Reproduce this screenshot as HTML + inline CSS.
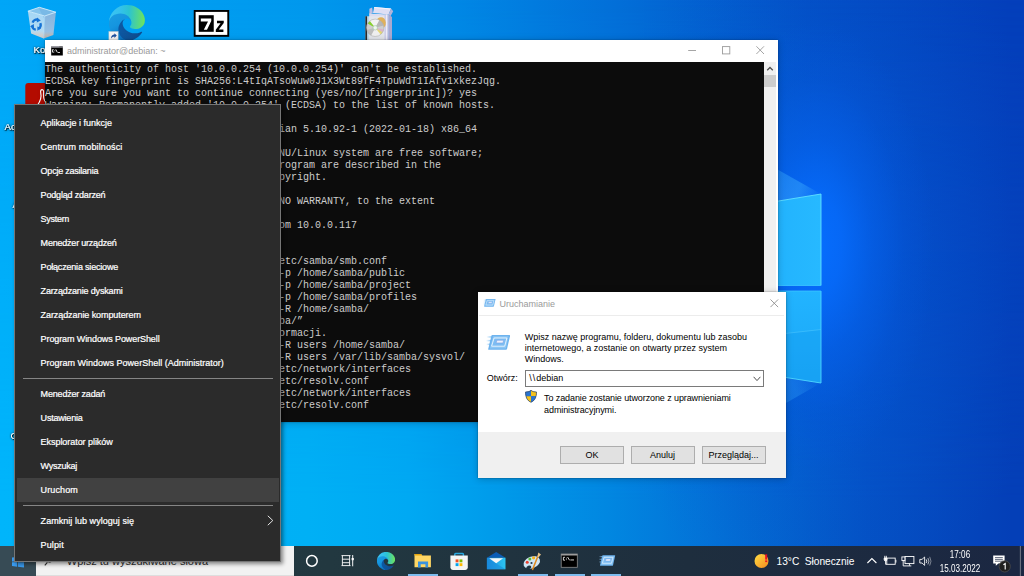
<!DOCTYPE html>
<html lang="pl">
<head>
<meta charset="utf-8">
<title>Pulpit</title>
<style>
*{box-sizing:border-box;margin:0;padding:0}
html,body{width:1024px;height:576px;overflow:hidden;background:#0370d9}
body{position:relative;font-family:"Liberation Sans",sans-serif;font-size:9px;color:#000}
.abs{position:absolute}
/* wallpaper */
#wp1{left:0;top:0;width:1024px;height:576px;background:linear-gradient(90deg,#00a6f7 0px,#0098ed 308px,#0187e5 458px,#0370d9 608px,#0450c6 808px,#043fbb 1008px,#043fbb 1024px)}
#wp2{left:0;top:0;width:1024px;height:576px;background:linear-gradient(90deg,#00b5fb 0px,#00b0f5 308px,#00a9f3 408px,#0099e9 508px,#0187e1 608px,#0372d7 708px,#0451c4 868px,#043fb7 1012px,#043fb7 1024px);-webkit-mask-image:linear-gradient(180deg,rgba(0,0,0,0) 0px,rgba(0,0,0,1) 500px);mask-image:linear-gradient(180deg,rgba(0,0,0,0) 0px,rgba(0,0,0,1) 500px)}
#glow{left:560px;top:-120px;width:520px;height:760px;background:radial-gradient(ellipse 118px 225px at 256px 366px,rgba(6,110,255,.96) 0%,rgba(6,106,250,.9) 22%,rgba(5,98,238,.6) 48%,rgba(5,90,225,.26) 75%,rgba(5,85,215,0) 100%),radial-gradient(ellipse 250px 340px at 262px 380px,rgba(5,92,225,.42) 0%,rgba(5,88,220,.3) 40%,rgba(5,84,212,.1) 78%,rgba(5,80,210,0) 100%)}
#deskicons{left:0;top:0}
/* terminal */
#term{left:45px;top:40px;width:732.5px;height:382px;background:#fff;box-shadow:0 1px 7px rgba(0,0,0,.22),0 0 1.5px rgba(0,0,0,.35)}
#term .tb{left:0;top:0;width:100%;height:22px;background:#fff}
#term .title{left:22px;top:0;line-height:22px;color:#9a9a9a;font-size:9px;white-space:pre}
#term .con{left:0;top:22px;width:719.4px;height:360px;background:#0c0c0c;overflow:hidden}
#term pre{position:absolute;left:0;top:2px;font-family:"Liberation Mono",monospace;font-size:10px;line-height:12px;color:#cccccc;white-space:pre}
#term .sb{left:719.4px;top:22px;width:12.1px;height:360px;background:#f0f0f0}
#term .thumb{left:0;top:13px;width:12.1px;height:12.2px;background:#cdcdcd}
/* run dialog */
#run{left:477.5px;top:292px;width:308px;height:186px;background:#fff;box-shadow:0 1px 7px rgba(0,0,0,.22),0 0 1.5px rgba(0,0,0,.4)}
#run .title{left:22px;top:.7px;line-height:23px;color:#9a9a9a;font-size:9px}
#run .sep{left:1.5px;top:23.2px;width:305px;height:1px;background:#ececec}
#run .foot{left:0;top:140px;width:308px;height:46px;background:#f0f0f0}
#run .txt{white-space:pre;font-size:9px;line-height:10.9px;color:#000}
#run .inp{left:47.3px;top:77.8px;width:239.4px;height:17.4px;border:1px solid #7a7a7a;background:#fff}
#run .btn{top:154.4px;width:64px;height:17.5px;border:1px solid #adadad;background:#e1e1e1;text-align:center;line-height:17px;font-size:9px}
/* taskbar */
#task{left:0;top:546px;width:1024px;height:30px;background:linear-gradient(90deg,#243a42 0px,#223840 330px,#1e2e3e 688px,#1b2742 1010px,#1b2742 1024px)}
#task .start{left:0;top:0;width:36px;height:30px;background:#374b55}
#task .search{left:36px;top:0;width:258px;height:30px;background:#f2f2f2;box-shadow:inset 0 -1px 0 #dedede}
#task .ul{top:28px;height:2px;width:30px;background:#7dbcee}
#task .tt{color:#fff;white-space:pre}
/* menu */
#menu{left:14px;top:104px;width:267px;height:458px;background:#2b2b2b;border:1px solid #767676;box-shadow:2px 2px 4px rgba(0,0,0,.45)}
#menu .it{-webkit-text-stroke:.22px #fff;position:absolute;left:2px;width:262px;height:24px;line-height:24px;padding-left:23.6px;color:#fff;font-size:9px;white-space:pre}
#menu .hl{background:#414141}
#menu .sp{position:absolute;left:8px;width:250px;height:1px;background:#858585}
</style>
</head>
<body>
<div class="abs" id="wp1"></div>
<div class="abs" id="wp2"></div>
<div class="abs" id="glow"></div>
<svg class="abs" style="left:0;top:0" width="1024" height="576" viewBox="0 0 1024 576">
<defs>
<linearGradient id="pg1" x1="0" y1="0" x2="1" y2="0"><stop offset="0" stop-color="#1aa9fb"/><stop offset="1" stop-color="#27b9ff"/></linearGradient>
<linearGradient id="pg2" x1="0" y1="0" x2="0" y2="1"><stop offset="0" stop-color="#22b4ff"/><stop offset="1" stop-color="#1aa6f6"/></linearGradient>
</defs>
<linearGradient id="ray1" x1="821" y1="194" x2="740" y2="160" gradientUnits="userSpaceOnUse"><stop offset="0" stop-color="#49b4ff" stop-opacity=".0"/><stop offset=".25" stop-color="#3aa8fb" stop-opacity=".5"/><stop offset="1" stop-color="#2a9af5" stop-opacity=".35"/></linearGradient>
<linearGradient id="ray2" x1="821" y1="383" x2="740" y2="420" gradientUnits="userSpaceOnUse"><stop offset="0" stop-color="#49b4ff" stop-opacity="0"/><stop offset=".3" stop-color="#2f9ff6" stop-opacity=".35"/><stop offset="1" stop-color="#2a9af5" stop-opacity=".25"/></linearGradient>
<polygon points="821,194 700,126 700,214" fill="url(#ray1)"/>
<polygon points="821,383 700,364 700,452" fill="url(#ray2)"/>
<polygon points="700,214 821,194 821,285.5 700,285.5" fill="url(#pg1)"/>
<polygon points="700,291 821,291 821,383 700,364" fill="url(#pg2)"/>
<polygon points="700,343 821,329.5 821,383 700,364" fill="#1299ee" opacity=".3"/><line x1="700" y1="343" x2="821" y2="329.5" stroke="#55ccff" stroke-width=".7" opacity=".7"/>
<polyline points="700,214 821,194 821,285.5" fill="none" stroke="#62e2ff" stroke-width="1" opacity=".9"/>
<polyline points="821,291 821,383 700,364" fill="none" stroke="#4fd6ff" stroke-width="1" opacity=".9"/>
<line x1="700" y1="285.5" x2="821" y2="285.5" stroke="#3cc6ff" stroke-width=".8"/>
<line x1="700" y1="291" x2="821" y2="291" stroke="#3cc6ff" stroke-width=".8"/>
</svg>
<svg class="abs" id="deskicons" width="1024" height="576" viewBox="0 0 1024 576">
<defs>
<linearGradient id="ea" x1="63" y1="170" x2="241" y2="170" gradientUnits="userSpaceOnUse"><stop offset="0" stop-color="#0c59a4"/><stop offset="1" stop-color="#114a8b"/></linearGradient>
<linearGradient id="eb" x1="20" y1="60" x2="130" y2="250" gradientUnits="userSpaceOnUse"><stop offset="0" stop-color="#1b9de2"/><stop offset=".4" stop-color="#1595df"/><stop offset="1" stop-color="#0669bc"/></linearGradient>
<linearGradient id="ec" x1="0" y1="80" x2="256" y2="90" gradientUnits="userSpaceOnUse"><stop offset="0" stop-color="#3cc4f3"/><stop offset=".3" stop-color="#34c1ed"/><stop offset=".55" stop-color="#2bc3d2"/><stop offset="1" stop-color="#6fe35a"/></linearGradient>
<symbol id="edge" viewBox="0 0 256 256">
<path fill="url(#ea)" d="M231 190.500c-3.400 1.800-6.900 3.400-10.500 4.700a101.400 101.400 0 0 1-35.600 6.400c-46.900 0-87.800-32.200-87.800-73.600a31.200 31.200 0 0 1 16.300-27.100c-42.400 1.800-53.300 46-53.300 71.800 0 73.200 67.400 80.600 82 80.600 7.800 0 19.600-2.300 26.700-4.500l1.300-.4a127 127 0 0 0 65.800-52.200 3.900 3.900 0 0 0-5.200-5.500z"/>
<path fill="url(#eb)" d="M105.700 241.400a79.200 79.200 0 0 1-22.700-21.300 80.700 80.700 0 0 1 29.500-120c3.100-1.500 8.400-4.100 15.500-4a32.400 32.400 0 0 1 25.700 13 31.900 31.900 0 0 1 6.300 18.700c0-.2 24.500-79.600-80-79.600-43.900 0-80 41.600-80 78.200a130.200 130.200 0 0 0 12.100 56 128 128 0 0 0 156.400 67 75.500 75.500 0 0 1-62.800-8z"/>
<path fill="url(#ec)" d="M152.300 148.900c-.8 1-3.300 2.500-3.300 5.600 0 2.600 1.700 5.200 4.800 7.300 14.300 10 41.400 8.600 41.500 8.600a59.600 59.600 0 0 0 30.300-8.300 61.400 61.400 0 0 0 30.400-52.900c.3-22.400-8-37.300-11.300-43.900C223.500 23.900 177.700 0 128 0A128 128 0 0 0 0 126.200c.5-36.500 36.800-66 80-66 3.500 0 23.500.3 42 10a72.600 72.600 0 0 1 30.900 29.300c6.100 10.600 7.200 24.100 7.200 29.500 0 5.300-2.700 13.300-7.800 19.900z"/>
</symbol>
<linearGradient id="de1" x1="0" y1="0" x2="1" y2="0"><stop offset="0" stop-color="#35b4ee"/><stop offset=".45" stop-color="#2ec1dc"/><stop offset="1" stop-color="#70e35a"/></linearGradient>
<linearGradient id="de2" x1="0" y1="0" x2="0" y2="1"><stop offset="0" stop-color="#2190e2"/><stop offset="1" stop-color="#1567c2"/></linearGradient>
<linearGradient id="rb1" x1="0" y1="0" x2="0" y2="1"><stop offset="0" stop-color="#a4d6f5"/><stop offset=".72" stop-color="#b4dbf3"/><stop offset=".86" stop-color="#ccd0d3"/><stop offset="1" stop-color="#c9c9c9"/></linearGradient>
<linearGradient id="rb2" x1="0" y1="0" x2="0" y2="1"><stop offset="0" stop-color="#84b4de"/><stop offset=".74" stop-color="#98bfe2"/><stop offset=".88" stop-color="#b7b9bc"/><stop offset="1" stop-color="#b3b3b3"/></linearGradient>
<radialGradient id="cd" cx=".5" cy=".5" r=".5"><stop offset="0" stop-color="#f4f4f4"/><stop offset=".2" stop-color="#bdbdbd"/><stop offset=".6" stop-color="#dcdcdc"/><stop offset="1" stop-color="#b4b4b4"/></radialGradient>
<filter id="ts" x="-20%" y="-20%" width="140%" height="160%"><feDropShadow dx=".7" dy=".8" stdDeviation=".55" flood-color="#000" flood-opacity="1" result="a"/><feDropShadow in="a" dx="0" dy="0" stdDeviation=".8" flood-color="#000" flood-opacity=".7"/></filter>
</defs>
<!-- recycle bin -->
<path d="M27.9 11.2 L44.7 16 L43.7 38.4 L31.1 33.6 Z" fill="url(#rb1)"/>
<path d="M44.7 16 L55.9 12.2 L53.4 35 L43.7 38.4 Z" fill="url(#rb2)"/>
<path d="M27.9 11.2 L39.3 7.3 L55.9 12.2 L44.7 16 Z" fill="#86c4ec"/>
<path d="M39.3 7.3 L55.9 12.2 L44.7 16 L44.4 19 L39.6 10 Z" fill="#6fb0e2" opacity=".55"/>
<path d="M27.9 11.2 L39.3 7.3 L55.9 12.2 L44.7 16 Z" fill="none" stroke="#d4ecfb" stroke-width=".9"/>
<path d="M44.7 16 L43.7 38.4" stroke="#c4e2f6" stroke-width=".6"/>
<g fill="none" stroke="#1673d6" stroke-width="2.3"><path d="M32.6 22.6 A4.3 4.8 0 0 1 38 19.8"/><path d="M40.4 23.2 A4.3 4.8 0 0 1 38.8 28.8"/><path d="M35.8 29.6 A4.3 4.8 0 0 1 32 25.6"/></g>
<g fill="#1673d6"><path d="M37 17.6 L40.8 20.6 L36.8 22.4 Z"/><path d="M41.2 28 L37.4 30.8 L37.4 26.4 Z"/><path d="M30 26.4 L33.8 24 L34 28.2 Z"/></g>
<!-- edge -->
<use href="#edge" x="108.9" y="5" width="36" height="36"/>
<rect x="108.9" y="31.6" width="9.2" height="8.6" fill="#f4f4f4" stroke="#c9c9c9" stroke-width=".5"/>
<path d="M111 38.6 C111 36 112.6 34.6 114.4 34.6 L114.4 33.2 L116.8 35.6 L114.4 38 L114.4 36.4 C113 36.4 112 37.2 111 38.6 Z" fill="#1d4f9e"/>
<!-- 7z -->
<rect x="193.75" y="10" width="35.45" height="26.8" fill="#000"/><rect x="195.6" y="11.9" width="31.7" height="23" fill="#fff"/>
<rect x="198.75" y="15.2" width="15" height="16.6" fill="#000"/>
<path d="M200.8 18.5 H211.25 V21 L207 29.8 H203.8 L208 21.4 H200.8 Z" fill="#fff"/>
<path d="M217 20.8 H223.75 V23 L218.8 29.6 H223.4 V32 H215.8 V29.8 L220.6 23.2 H217 Z" fill="#000"/>
<!-- installer -->
<path d="M369.4 8.8 L372.2 7.6 L372.8 13 L369.4 14.4 Z" fill="#bfc0e4"/>
<path d="M374.2 7 L391 8.4 L388.6 14.6 L373 13 Z" fill="#dedff4"/>
<path d="M374.2 7 L391 8.4 L390.6 9.4 L374.2 8 Z" fill="#f4f4fc"/>
<path d="M391 8.4 L393.2 11.2 L390.4 16.4 L388.6 14.6 Z" fill="#b4b4da"/>
<path d="M369.2 13.6 L388.6 14.6 L388.6 40.4 L369.2 40.4 Z" fill="#dcdcef"/>
<path d="M384.4 14.4 L388.6 14.6 L388.6 40.4 L384.4 40.4 Z" fill="#cfcfe8"/>
<path d="M386 14.5 L387 14.55 L387 40.4 L386 40.4 Z" fill="#ececf8"/>
<path d="M388.6 14.6 L392 17 L392 40.4 L388.6 40.4 Z" fill="#a9a9d0"/>
<rect x="365.4" y="16.25" width="18.8" height="24.2" fill="#e4e8ec" opacity=".82"/>
<rect x="365.4" y="16.25" width="1.7" height="24.2" fill="#2a2a2a"/>
<path d="M377.6 18.4 C381.6 16 385.4 18 385.8 22.4 C386 25.6 384.6 27.4 382.6 28.2 L377 25 Z" fill="#e0b15c"/>
<circle cx="375.2" cy="27.8" r="8.7" fill="#cfcfcf"/>
<path d="M375.2 27.8 L369 21.7 A8.7 8.7 0 0 1 379.4 20.2 Z" fill="#f2f2f2"/>
<path d="M375.2 27.8 L381.4 33.9 A8.7 8.7 0 0 1 371 35.4 Z" fill="#efefef"/>
<path d="M375.2 27.8 L379.4 20.2 A8.7 8.7 0 0 1 383.6 25.6 Z" fill="#b6b6b6"/>
<path d="M375.2 27.8 L371 35.4 A8.7 8.7 0 0 1 366.8 30 Z" fill="#bcbcbc"/>
<path d="M375.2 27.8 L367.6 23.6 A8.7 8.7 0 0 1 369.8 21 Z" fill="#86d02c"/>
<path d="M375.2 27.8 L382.6 32.2 A8.7 8.7 0 0 1 380.6 34.6 Z" fill="#e8d65a" opacity=".8"/>
<path d="M375.2 27.8 L383.8 29.4 A8.7 8.7 0 0 1 382.8 32 Z" fill="#e79ac0" opacity=".55"/>
<circle cx="375.2" cy="27.8" r="8.7" fill="none" stroke="#a9a9a9" stroke-width=".5"/>
<circle cx="375.2" cy="27.8" r="2.2" fill="#eef6ee" stroke="#9cc4a4" stroke-width=".6"/>
<!-- adobe -->
<path d="M28.3 83 H60 V120 H25.3 V86 Q25.3 83 28.3 83 Z" fill="#b30b00"/>
<path d="M37.6 105 C40 101.6 41.7 97 40.7 92.6 C39.9 88.7 44 88.5 43.6 92.4 C43.2 96 43.4 99.6 45.6 102" fill="none" stroke="#fff" stroke-width="1.15"/>
<!-- labels -->
<g font-family="Liberation Sans, sans-serif" font-size="9.6" fill="#fff" filter="url(#ts)"><text x="33.6" y="52.6">Kosz</text><text x="4.6" y="130.2">Acrobat</text><text x="12.6" y="208">A</text><text x="10.6" y="439.2">G</text></g>
</svg>
<div class="abs" id="term">
<div class="abs tb"></div>
<svg class="abs" style="left:6px;top:5.5px" width="12" height="10" viewBox="0 0 12 10"><rect x=".2" y=".3" width="11.6" height="9.2" fill="#000"/><rect x=".2" y=".3" width="11.6" height="1.3" fill="#bcbcc6"/><rect x="8.3" y=".5" width="3" height=".8" fill="#555"/><path d="M2.6 3.6 L1.6 3.6 L1.6 6.2 L2.8 6.2 M3.8 4.4 L3.8 4.9 M3.8 5.8 L3.8 6.2 M4.8 3.4 L6.3 6.4" stroke="#fff" stroke-width=".9" fill="none"/><rect x="6.8" y="6" width="2.2" height=".8" fill="#fff"/></svg>
<div class="abs title">administrator@debian: ~</div>
<svg class="abs" style="left:636px;top:0" width="96" height="22" viewBox="0 0 96 22"><g stroke="#9b9b9b" stroke-width=".9" fill="none"><line x1="7.2" y1="10.5" x2="15" y2="10.5"/><rect x="41.5" y="6.6" width="7.3" height="7.3"/><path d="M75.4 6.3 L83 14 M83 6.3 L75.4 14"/></g></svg>
<div class="abs con"><pre>The authenticity of host '10.0.0.254 (10.0.0.254)' can't be established.
ECDSA key fingerprint is SHA256:L4tIqATsoWuw0J1X3Wt89fF4TpuWdT1IAfv1xkezJqg.
Are you sure you want to continue connecting (yes/no/[fingerprint])? yes
Warning: Permanently added '10.0.0.254' (ECDSA) to the list of known hosts.
administrator@10.0.0.254's password:
Linux debian 5.10.92-1-amd64 #1 SMP Debian 5.10.92-1 (2022-01-18) x86_64

The programs included with the Debian GNU/Linux system are free software;
the exact distribution terms for each program are described in the
individual files in /usr/share/doc/*/copyright.

Debian GNU/Linux comes with ABSOLUTELY NO WARRANTY, to the extent
permitted by applicable law.
Last login: Tue Mar 15 16:58:08 2022 from 10.0.0.117
administrator@debian:~$ history
    1  su -
    2  sudo mv /etc/samba/smb.conf /etcetc/samba/smb.conf
    3  sudo mkdir -m 0770 --verbose --p-p /home/samba/public
    4  sudo mkdir -m 0770 --verbose --p-p /home/samba/project
    5  sudo mkdir -m 0770 --verbose --p-p /home/samba/profiles
    6  sudo chown --verbose --changes r-R /home/samba/
    7  sudo chmod -R 0770 „/home/samba/ba/”
    8  Po wykonaniu wpisz wiecej szczegormacji.
    9  sudo chgrp --verbose --changes --R users /home/samba/
   10  sudo chgrp --verbose --changes --R users /var/lib/samba/sysvol/
   11  sudo nano --linenumbers --mouse etc/network/interfaces
   12  sudo nano --linenumbers --mouse etc/resolv.conf
   13  sudo cat  --number --show-ends -etc/network/interfaces
   14  sudo cat  --number --show-ends -etc/resolv.conf
administrator@debian:~$ </pre></div>
<div class="abs sb"><div class="abs thumb"></div><svg class="abs" style="left:0;top:0" width="12" height="12" viewBox="0 0 12 12"><path d="M3.2 8.2 L6 5.5 L8.8 8.2" stroke="#505050" stroke-width="1.3" fill="none"/></svg></div>
</div>
<div class="abs" id="run">
<svg class="abs" style="left:5.6px;top:6.9px" width="12.6" height="8" viewBox="-2 0 24.3 15"><g>
<linearGradient id="rung" x1="0" y1="0" x2="1" y2="0"><stop offset="0" stop-color="#9fd0f7" stop-opacity="0"/><stop offset="1" stop-color="#7fbef2"/></linearGradient>
<rect x="-1.6" y="1.2" width="5.4" height="1.5" fill="url(#rung)"/><rect x="-2" y="4.9" width="5" height="1.5" fill="url(#rung)"/><rect x="-1.8" y="8.6" width="4" height="1.5" fill="url(#rung)"/>
<path d="M4.4 0 H21.4 Q22.3 0 22.1 .9 L19 14 Q18.8 14.8 18 14.8 H.9 Q0 14.8 .2 13.9 L3.4 .8 Q3.6 0 4.4 0 Z" fill="#6eb3ee"/>
<path d="M5.2 1.3 L20.5 1.3 L17.8 13.4 L1.9 13.4 Z" fill="#8cc6f4"/>
<path d="M6.1 3 L18.9 3 L16.7 11.2 L3.6 11.2 Z" fill="#7dbcf2" stroke="#f4faff" stroke-width=".85"/>
<path d="M8.9 5.3 L15.6 5.3 L15 7.9 L8.2 7.9 Z" fill="#eef2fd" stroke="#6f97e2" stroke-width=".5"/>
</g></svg>
<div class="abs title">Uruchamianie</div>
<svg class="abs" style="left:292.7px;top:7.4px" width="8.6" height="8.6" viewBox="0 0 9 9"><path d="M.5 .5 L8.5 8.5 M8.5 .5 L.5 8.5" stroke="#8f8f8f" stroke-width=".95" fill="none"/></svg>
<div class="abs sep"></div>
<svg class="abs" style="left:8.5px;top:43.1px" width="24.3" height="15" viewBox="-2 0 24.3 15"><g>
<linearGradient id="rung" x1="0" y1="0" x2="1" y2="0"><stop offset="0" stop-color="#9fd0f7" stop-opacity="0"/><stop offset="1" stop-color="#7fbef2"/></linearGradient>
<rect x="-1.6" y="1.2" width="5.4" height="1.5" fill="url(#rung)"/><rect x="-2" y="4.9" width="5" height="1.5" fill="url(#rung)"/><rect x="-1.8" y="8.6" width="4" height="1.5" fill="url(#rung)"/>
<path d="M4.4 0 H21.4 Q22.3 0 22.1 .9 L19 14 Q18.8 14.8 18 14.8 H.9 Q0 14.8 .2 13.9 L3.4 .8 Q3.6 0 4.4 0 Z" fill="#6eb3ee"/>
<path d="M5.2 1.3 L20.5 1.3 L17.8 13.4 L1.9 13.4 Z" fill="#8cc6f4"/>
<path d="M6.1 3 L18.9 3 L16.7 11.2 L3.6 11.2 Z" fill="#7dbcf2" stroke="#f4faff" stroke-width=".85"/>
<path d="M8.9 5.3 L15.6 5.3 L15 7.9 L8.2 7.9 Z" fill="#eef2fd" stroke="#6f97e2" stroke-width=".5"/>
</g></svg>
<div class="abs txt" style="left:47.3px;top:39.7px">Wpisz nazwę programu, folderu, dokumentu lub zasobu
internetowego, a zostanie on otwarty przez system
Windows.</div>
<div class="abs txt" style="left:9.3px;top:81px">Otwórz:</div>
<div class="abs inp"><div class="abs txt" style="left:3.4px;top:2.2px"><span style="letter-spacing:1px">\\</span>debian</div>
<svg class="abs" style="left:227px;top:5.2px" width="8" height="6" viewBox="0 0 8 6"><path d="M.6 .8 L4 4.6 L7.4 .8" stroke="#505050" stroke-width="1" fill="none"/></svg></div>
<svg class="abs" style="left:47.6px;top:98.4px" width="12" height="12.6" viewBox="0 0 12 12.6"><path d="M6 .3 C4.6 1.6 2.6 2 .5 2 C.5 7 2 10.6 6 12.3 C10 10.6 11.5 7 11.5 2 C9.4 2 7.4 1.6 6 .3 Z" fill="#1c5fb4"/><path d="M6 .3 C4.6 1.6 2.6 2 .5 2 C.5 3.6 .7 5 1 6.2 L6 6.2 Z" fill="#2a74d0"/><path d="M6 .3 C7.4 1.6 9.4 2 11.5 2 C11.5 3.6 11.3 5 11 6.2 L6 6.2 Z" fill="#f5c21b"/><path d="M1 6.2 C1.8 9.2 3.4 11.2 6 12.3 L6 6.2 Z" fill="#f5c21b"/><path d="M11 6.2 C10.2 9.2 8.6 11.2 6 12.3 L6 6.2 Z" fill="#2a74d0"/><path d="M6 .3 C4.6 1.6 2.6 2 .5 2 C.5 7 2 10.6 6 12.3 C10 10.6 11.5 7 11.5 2 C9.4 2 7.4 1.6 6 .3 Z" fill="none" stroke="#3b4a63" stroke-width=".7"/></svg>
<div class="abs txt" style="left:66.6px;top:100.4px;line-height:12px;letter-spacing:-.1px">To zadanie zostanie utworzone z uprawnieniami
administracyjnymi.</div>
<div class="abs foot"></div>
<div class="abs btn" style="left:82.5px">OK</div>
<div class="abs btn" style="left:153px">Anuluj</div>
<div class="abs btn" style="left:224px">Przeglądaj...</div>
</div>
<div class="abs" id="task">
<div class="abs start"></div>
<div class="abs search"></div>
<div class="abs" style="left:66.8px;top:9.2px;font-size:11px;line-height:13px;color:#2e2e2e;white-space:pre" id="stxt">Wpisz tu wyszukiwane słowa</div>
<svg class="abs" style="left:0;top:0" width="1024" height="30" viewBox="0 546 1024 30">
<defs>
<linearGradient id="te1" x1="0" y1="0" x2="1" y2="0"><stop offset="0" stop-color="#35b4ee"/><stop offset=".5" stop-color="#2ec3d9"/><stop offset="1" stop-color="#6fe25c"/></linearGradient>
<linearGradient id="te2" x1="0" y1="0" x2="0" y2="1"><stop offset="0" stop-color="#1f8fe0"/><stop offset="1" stop-color="#1466c0"/></linearGradient>
<linearGradient id="sun" x1="0" y1="0" x2="1" y2="1"><stop offset="0" stop-color="#ffdf45"/><stop offset="1" stop-color="#f68a1e"/></linearGradient>
<linearGradient id="mailg" x1="0" y1="0" x2="1" y2="0"><stop offset="0" stop-color="#1a8fe0"/><stop offset="1" stop-color="#2cc4f2"/></linearGradient>
</defs>
<!-- start logo -->
<g fill="#3a9cf0"><path d="M12 557.6 L17.2 556.9 L17.2 561.4 L12 561.4 Z"/><path d="M18 556.8 L24 556 L24 561.4 L18 561.4 Z"/><path d="M12 562.2 L17.2 562.2 L17.2 566.7 L12 566 Z"/><path d="M18 562.2 L24 562.2 L24 567.6 L18 566.8 Z"/></g>
<!-- search magnifier -->
<circle cx="49.6" cy="559.2" r="3" fill="none" stroke="#333" stroke-width="1"/><path d="M44.8 565.3 L47.4 562.4" stroke="#333" stroke-width="1.1"/>
<!-- cortana -->
<circle cx="311.9" cy="560.9" r="5.3" fill="none" stroke="#fff" stroke-width="1.5"/>
<!-- task view -->
<g stroke="#fff" stroke-width=".95" fill="none"><path d="M341.5 555.6 H350.5 M341.5 565.6 H350.5 M342.4 555.6 V565.6 M349.6 555.6 V565.6 M342.4 559.2 H349.6 M342.4 562.7 H349.6" opacity=".95"/><path d="M352.7 555 V566.3"/></g><rect x="351.6" y="558" width="2.2" height="2.2" fill="#fff"/>
<!-- edge -->
<use href="#edge" x="376.9" y="551.9" width="18.2" height="18.2"/>
<!-- explorer -->
<path d="M414.5 553.9 H421 L422.3 555.4 H430.9 V567.2 H414.5 Z" fill="#ffd764"/><path d="M414.5 553.9 H421 L422.3 555.4 H414.5 Z" fill="#e6a710"/>
<path d="M418 567.5 V561.6 H428.1 V567.5 H425.4 V564.3 H420.7 V567.5 Z" fill="#3a93df"/>
<!-- store -->
<path d="M454.8 556.4 V554.2 Q454.8 553.4 455.6 553.4 H462.6 Q463.4 553.4 463.4 554.2 V556.4" fill="none" stroke="#28a8e0" stroke-width="1.5"/>
<path d="M450.4 555.6 H467.8 V567.6 Q467.8 570 465.4 570 H452.8 Q450.4 570 450.4 567.6 Z" fill="#f4f4f4"/>
<rect x="455.6" y="559.4" width="2.9" height="2.9" fill="#f25022"/><rect x="459.5" y="559.4" width="2.9" height="2.9" fill="#7fba00"/><rect x="455.6" y="563.2" width="2.9" height="2.9" fill="#00a4ef"/><rect x="459.5" y="563.2" width="2.9" height="2.9" fill="#ffb900"/>
<!-- mail -->
<path d="M486.9 557.7 L496.2 552.1 L505.5 557.7 Z" fill="#0b5cb5"/><rect x="486.9" y="557.7" width="18.6" height="11.6" fill="url(#mailg)"/><path d="M486.9 557.7 L505.5 569.3 L486.9 569.3 Z" fill="#1583d8" opacity=".5"/><path d="M489.3 558.2 H503.1 L496.2 563.2 Z" fill="#f6f6f6"/>
<!-- paint -->
<g transform="rotate(-22 532 562)"><ellipse cx="531.6" cy="562.3" rx="8.6" ry="5.8" fill="#cfe5f4"/><ellipse cx="527" cy="565.8" rx="2.6" ry="1.7" fill="#1f3340"/></g>
<circle cx="527.2" cy="562.2" r="1.5" fill="#e8412f"/><circle cx="529.8" cy="559" r="1.5" fill="#5bb83a"/><circle cx="533.6" cy="557.8" r="1.6" fill="#f4b21c"/><circle cx="531.5" cy="563" r="1.1" fill="#26384a"/>
<path d="M532.6 569.4 L537.9 556.2" stroke="#e08a1f" stroke-width="1.5" stroke-linecap="round"/><path d="M537.4 556.6 L538.3 552.6 L541 554.4 L538.6 557.2 Z" fill="#e6c28a"/>
<!-- cmd -->
<rect x="561.2" y="554" width="16.1" height="13.3" fill="#000" stroke="#8c8c8c" stroke-width=".8"/><rect x="561.2" y="554" width="16.1" height="1.5" fill="#9c9c9c"/>
<g stroke="#e8e8e8" stroke-width=".9" fill="none"><path d="M565 557.3 H563.4 V560.2 H565 M566.4 557.8 V558.5 M566.4 559.4 V560.1 M567.6 557 L569.6 560.3"/></g><rect x="570.4" y="559.5" width="3.6" height=".9" fill="#e8e8e8"/>
<!-- run -->
<g transform="translate(599.9 555.2) scale(.69 .72)">
<linearGradient id="rung2" x1="0" y1="0" x2="1" y2="0"><stop offset="0" stop-color="#9fd0f7" stop-opacity="0"/><stop offset="1" stop-color="#7fbef2"/></linearGradient>
<rect x="-1.6" y="1.2" width="5.4" height="1.5" fill="url(#rung2)"/><rect x="-2" y="4.9" width="5" height="1.5" fill="url(#rung2)"/><rect x="-1.8" y="8.6" width="4" height="1.5" fill="url(#rung2)"/>
<path d="M4.4 0 H21.4 Q22.3 0 22.1 .9 L19 14 Q18.8 14.8 18 14.8 H.9 Q0 14.8 .2 13.9 L3.4 .8 Q3.6 0 4.4 0 Z" fill="#6eb3ee"/>
<path d="M5.2 1.3 L20.5 1.3 L17.8 13.4 L1.9 13.4 Z" fill="#8cc6f4"/>
<path d="M6.1 3 L18.9 3 L16.7 11.2 L3.6 11.2 Z" fill="#7dbcf2" stroke="#f4faff" stroke-width=".85"/>
<path d="M8.9 5.3 L15.6 5.3 L15 7.9 L8.2 7.9 Z" fill="#eef2fd" stroke="#6f97e2" stroke-width=".5"/>
</g>
<!-- weather -->
<circle cx="761.5" cy="561" r="7" fill="url(#sun)"/><rect x="765.2" y="554.3" width="2" height="5.3" fill="#e81123"/><rect x="765.2" y="560.4" width="2" height="1.7" fill="#e81123"/>
<!-- tray chevron -->
<path d="M867.4 563 L871.9 558.6 L876.4 563" stroke="#fff" stroke-width="1.1" fill="none"/>
<!-- battery -->
<g stroke="#fff" stroke-width=".9" fill="none"><rect x="886.8" y="558.1" width="8.4" height="6.2"/><path d="M895.9 559.8 V562.6 M884.8 555.8 V558 M886.3 555.8 V558" /><path d="M884.2 558 H886.9 V559.8 Q886.9 560.9 885.55 560.9 Q884.2 560.9 884.2 559.8 Z" fill="#fff"/><path d="M885.6 560.9 V564.3 H886.8"/></g>
<!-- network -->
<g stroke="#fff" stroke-width=".9" fill="none"><rect x="905" y="556.5" width="8.9" height="7.1"/><path d="M909.45 563.6 V565.7 M906.1 565.9 H911.3"/><rect x="901.9" y="556.9" width="3" height="3.6" fill="#1b2742"/><path d="M903.2 560.5 V565.9 H906.1"/></g>
<!-- volume -->
<g stroke="#fff" stroke-width=".85" fill="none"><path d="M919.8 559.4 H922 L924.6 557 V565.4 L922 563 H919.8 Z"/><path d="M926.2 559.4 Q927.4 561.2 926.2 563"/><path d="M927.9 558 Q929.9 561.2 927.9 564.4" opacity=".75"/><path d="M929.7 556.8 Q932.3 561.2 929.7 565.6" opacity=".5"/></g>
<!-- notifications -->
<path d="M993.2 555.4 H1004.6 V563.4 H998.4 L995.8 565.8 V563.4 H993.2 Z" fill="#fff"/><g stroke="#1b2742" stroke-width=".7"><path d="M995 557.6 H1002.8 M995 559.4 H1002.8 M995 561.2 H1002.8"/></g>
<circle cx="1004.7" cy="566.4" r="5.6" fill="#1f1f1f" stroke="#4c4c4c" stroke-width=".8"/>
<path d="M1003.4 564.8 L1005.2 563.6 V569.4" stroke="#fff" stroke-width="1.1" fill="none"/>
<rect x="1019.9" y="546" width=".8" height="30" fill="#8a8f99"/>
</svg>
<div class="abs ul" style="left:408px"></div>
<div class="abs ul" style="left:518px"></div>
<div class="abs ul" style="left:554.8px"></div>
<div class="abs ul" style="left:591.4px"></div>
<div class="abs tt" id="t13" style="left:776.5px;top:10.2px;font-size:10.2px;line-height:12px">13°C</div>
<div class="abs tt" id="tsl" style="left:804.7px;top:10.2px;font-size:10.2px;line-height:12px">Słonecznie</div>
<div class="abs tt" id="tclk" style="left:929.6px;width:60px;text-align:center;top:2.9px;font-size:10px;line-height:11px;transform:scaleX(.81)">17:06</div>
<div class="abs tt" id="tdat" style="left:929.6px;width:60px;text-align:center;top:16.6px;font-size:10px;line-height:11px;transform:scaleX(.81)">15.03.2022</div>
</div>
<div class="abs" id="menu">
<div class="it" style="top:6px">Aplikacje i funkcje</div>
<div class="it" style="top:30px;letter-spacing:0.13px">Centrum mobilności</div>
<div class="it" style="top:54px;letter-spacing:-0.23px">Opcje zasilania</div>
<div class="it" style="top:78px;letter-spacing:-0.18px">Podgląd zdarzeń</div>
<div class="it" style="top:102px;letter-spacing:-0.25px">System</div>
<div class="it" style="top:126px;letter-spacing:-0.21px">Menedżer urządzeń</div>
<div class="it" style="top:150px;letter-spacing:-0.19px">Połączenia sieciowe</div>
<div class="it" style="top:174px;letter-spacing:-0.16px">Zarządzanie dyskami</div>
<div class="it" style="top:198px;letter-spacing:-0.08px">Zarządzanie komputerem</div>
<div class="it" style="top:222px;letter-spacing:-0.10px">Program Windows PowerShell</div>
<div class="it" style="top:246px">Program Windows PowerShell (Administrator)</div>
<div class="sp" style="top:272.8px"></div>
<div class="it" style="top:276.75px;letter-spacing:-0.18px">Menedżer zadań</div>
<div class="it" style="top:300.75px;letter-spacing:-0.21px">Ustawienia</div>
<div class="it" style="top:324.75px;letter-spacing:-0.05px">Eksplorator plików</div>
<div class="it" style="top:348.75px;letter-spacing:-0.24px">Wyszukaj</div>
<div class="it hl" style="top:372.75px;letter-spacing:0.12px">Uruchom</div>
<div class="sp" style="top:399.6px"></div>
<div class="it" style="top:403.5px;letter-spacing:0.04px">Zamknij lub wyloguj się</div>
<div class="it" style="top:427.5px;letter-spacing:0.12px">Pulpit</div>
<svg class="abs" style="left:251.6px;top:409.6px" width="7" height="11" viewBox="0 0 7 11"><path d="M.8 .8 L5.8 5.5 L.8 10.2" stroke="#e6e6e6" stroke-width="1" fill="none"/></svg>
</div>
</body>
</html>
